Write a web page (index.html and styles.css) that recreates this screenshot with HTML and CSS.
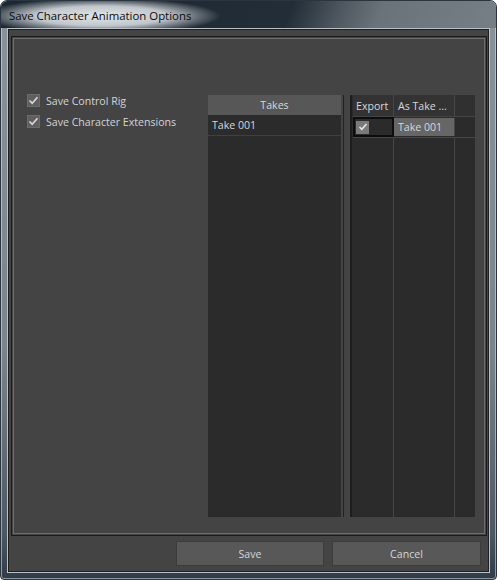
FILE: index.html
```html
<!DOCTYPE html>
<html>
<head>
<meta charset="utf-8">
<link rel="stylesheet" href="styles.css">
</head>
<body>
<div class="window">
  <div class="titlebar"><span class="title">Save Character Animation Options</span></div>
  <div class="client">
    <div class="panel">
      <div class="options">
        <div class="check">
          <span class="box"><svg width="11" height="11" viewBox="0 0 11 11"><path d="M1.5 5.5 L4.2 8.2 L9.5 2.2" fill="none" stroke="#d6d6d6" stroke-width="1.7"/></svg></span>
          <span class="label">Save Control Rig</span>
        </div>
        <div class="check">
          <span class="box"><svg width="11" height="11" viewBox="0 0 11 11"><path d="M1.5 5.5 L4.2 8.2 L9.5 2.2" fill="none" stroke="#d6d6d6" stroke-width="1.7"/></svg></span>
          <span class="label">Save Character Extensions</span>
        </div>
      </div>
      <div class="takes">
        <div class="takes-head">Takes</div>
        <div class="takes-row">Take 001</div>
      </div>
      <div class="splitter"><div class="split-line"></div></div>
      <div class="grid">
        <div class="grid-head">
          <div class="cell c1">Export</div>
          <div class="cell c2">As Take ...</div>
          <div class="cell c3"></div>
        </div>
        <div class="grid-row">
          <div class="cell c1 focus"><span class="mini-box"><svg width="10" height="10" viewBox="0 0 10 10"><path d="M1.5 5 L3.8 7.4 L8.5 2" fill="none" stroke="#e6e6e6" stroke-width="1.6"/></svg></span></div>
          <div class="cell c2 sel">Take 001</div>
          <div class="cell c3"></div>
        </div>
        <div class="grid-fill">
          <div class="cell c1"></div>
          <div class="cell c2"></div>
          <div class="cell c3"></div>
        </div>
      </div>
    </div>
    <div class="buttons">
      <div class="btn save">Save</div>
      <div class="btn cancel">Cancel</div>
    </div>
  </div>
</div>
</body>
</html>
```

FILE: styles.css
```css
html, body {
  margin: 0;
  padding: 0;
  background: #ffffff;
}

.window {
  width: 497px;
  height: 580px;
  box-sizing: border-box;
  border-radius: 7px 7px 4px 4px;
  border: 1px solid #2b3540;
  background: linear-gradient(180deg, #8a939a 0%, #7b848b 60%, #4c5864 92%, #2f3b46 100%);
  box-shadow: inset 0 0 0 1px rgba(220, 228, 232, 0.55);
  padding: 0 7px 7px 7px;
  display: flex;
  flex-direction: column;
  font-family: "Open Sans", "Liberation Sans", sans-serif;
  overflow: hidden;
}

.titlebar {
  height: 27px;
  margin: 0 -7px;
  padding-left: 8px;
  display: flex;
  align-items: center;
  border-radius: 6px 6px 0 0;
  background:
    radial-gradient(ellipse 120px 18px at 100px 15px, rgba(232, 236, 238, 0.97) 0%, rgba(220, 226, 230, 0.85) 55%, rgba(200, 208, 214, 0) 100%),
    linear-gradient(112deg, #1d2731 0%, #222d37 58%, #4f5860 68%, #6b737a 76%, #777f86 100%);
}

.title {
  font-size: 11.4px;
  color: #0b0b0b;
  padding-top: 2px;
}

.client {
  flex: 1;
  background: #444444;
  border: 1px solid #1f1f1f;
  box-shadow: 0 0 0 1px #b9c1c6;
  display: flex;
  flex-direction: column;
  margin-top: 1px;
}

.panel {
  margin: 6px 1px 0 2px;
  height: 500px;
  box-sizing: border-box;
  border: 1px solid #1b1b1b;
  box-shadow: inset 0 0 0 1px #444444, inset 0 0 0 2px #6d6d6d;
  padding: 58px 11px 18px 15px;
  display: flex;
}

.options {
  width: 181px;
  display: flex;
  flex-direction: column;
  gap: 8px;
  margin-top: -1px;
}

.check {
  display: flex;
  align-items: center;
  height: 13px;
}

.box {
  width: 11px;
  height: 11px;
  background: #5f5f5f;
  border: 1px solid #6c6c6c;
  display: flex;
  align-items: center;
  justify-content: center;
  margin-right: 6px;
}

.box svg {
  display: block;
}

.label {
  font-size: 10.6px;
  color: #d4d4d4;
  white-space: nowrap;
}

.takes {
  width: 133px;
  background: #2b2b2b;
  display: flex;
  flex-direction: column;
}

.takes-head {
  height: 20px;
  background: #575757;
  color: #d8d8d8;
  font-size: 10.6px;
  display: flex;
  align-items: center;
  justify-content: center;
}

.takes-row {
  height: 20px;
  border-bottom: 1px solid #404040;
  color: #d8d8d8;
  font-size: 10.6px;
  display: flex;
  align-items: center;
  padding-left: 4px;
}

.splitter {
  width: 9px;
  display: flex;
  padding-left: 2px;
  box-sizing: border-box;
}

.split-line {
  width: 1px;
  background: #232323;
}

.grid {
  width: 125px;
  box-sizing: border-box;
  border-left: 2px solid #1e1e1e;
  background: #2b2b2b;
  display: flex;
  flex-direction: column;
  padding-left: 1px;
}

.grid-head, .grid-row, .grid-fill {
  display: flex;
}

.grid-head {
  height: 21px;
  background: #333333;
  border-bottom: 1px solid #444444;
}

.grid-row {
  height: 20px;
  border-bottom: 1px solid #464646;
}

.grid-fill {
  flex: 1;
}

.cell {
  box-sizing: border-box;
  font-size: 10.6px;
  color: #d8d8d8;
  display: flex;
  align-items: center;
  white-space: nowrap;
  overflow: hidden;
}

.c1 {
  width: 41px;
  border-right: 1px solid #464646;
  padding-left: 3px;
}

.c2 {
  width: 61px;
  border-right: 1px solid #464646;
  padding-left: 4px;
}

.c3 {
  flex: 1;
}

.grid-head .c3 {
  background: #303030;
}

.focus {
  border: 2px solid #0d0d0d;
  padding-left: 1px;
}

.mini-box {
  width: 13px;
  height: 13px;
  background: #7a7a7a;
  display: flex;
  align-items: center;
  justify-content: center;
}

.sel {
  background: #666666;
  margin-top: 1px;
  height: 18px;
}

.buttons {
  display: flex;
  justify-content: flex-end;
  gap: 8px;
  margin-top: 5px;
  padding-right: 7px;
}

.btn {
  height: 23px;
  background: #585858;
  border: 1px solid #3c3c3c;
  color: #d6d6d6;
  font-size: 10.6px;
  display: flex;
  align-items: center;
  justify-content: center;
}

.save {
  width: 146px;
}

.cancel {
  width: 147px;
}
```
